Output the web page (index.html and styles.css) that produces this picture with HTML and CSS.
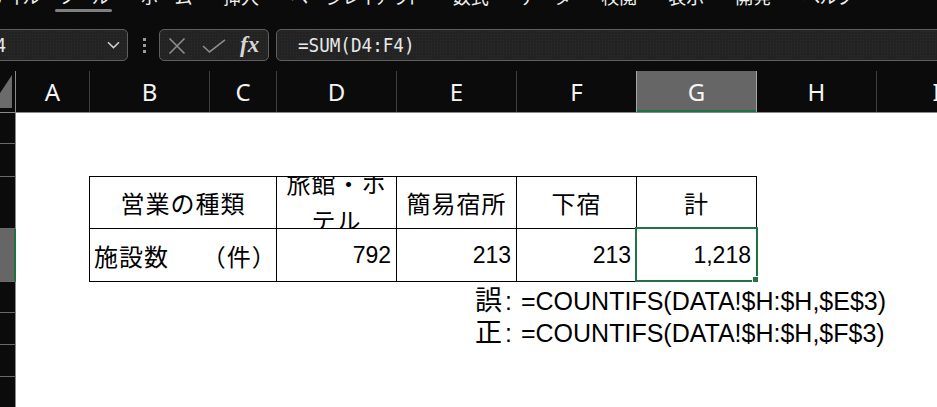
FILE: index.html
```html
<!DOCTYPE html>
<html lang="ja">
<head>
<meta charset="utf-8">
<title>施設数</title>
<link rel="stylesheet" href="styles.css">
</head>
<body>
  <nav class="tabs">
    <span class="tab first">ファイル</span>
    <span class="tab on">ツール</span>
    <span class="tab">ホーム</span>
    <span class="tab">挿入</span>
    <span class="tab">ページレイアウト</span>
    <span class="tab">数式</span>
    <span class="tab">データ</span>
    <span class="tab">校閲</span>
    <span class="tab">表示</span>
    <span class="tab">開発</span>
    <span class="tab">ヘルプ</span>
  </nav>

  <div class="fbar">
    <div class="namebox">
      <span class="mono">G4</span>
      <svg class="chev" width="13" height="8" viewBox="0 0 13 8"><path d="M1 1.2 L6.5 6.6 L12 1.2" fill="none" stroke="#d0d0d0" stroke-width="1.5"/></svg>
    </div>
    <div class="dots"><i></i><i></i><i></i></div>
    <div class="fx-group">
      <svg class="ico-x" width="18" height="16" viewBox="0 0 18 16"><path d="M1.5 0.5 L16.5 15.5 M16.5 0.5 L1.5 15.5" stroke="#8c8c8c" stroke-width="1.6" fill="none"/></svg>
      <svg class="ico-ok" width="24" height="14" viewBox="0 0 24 14"><path d="M1 7 L7.5 13 L23 0.8" stroke="#8c8c8c" stroke-width="1.6" fill="none"/></svg>
      <span class="fx">fx</span>
    </div>
    <div class="input"><span class="mono formula">=SUM(D4:F4)</span></div>
  </div>

  <div class="colhdr">
    <div class="corner">
      <svg width="15" height="41" viewBox="0 0 15 41"><polygon points="12,4 12,37 -10,37" fill="#6b6b6b"/></svg>
    </div>
    <div class="col col-a">A</div>
    <div class="col">B</div>
    <div class="col col-c">C</div>
    <div class="col">D</div>
    <div class="col">E</div>
    <div class="col">F</div>
    <div class="col sel">G</div>
    <div class="col">H</div>
    <div class="col">I</div>
  </div>

  <div class="main">
    <div class="rowhdr">
      <div class="rh r1"></div>
      <div class="rh r2"></div>
      <div class="rh r3"></div>
      <div class="rh r4 sel"></div>
      <div class="rh r5"></div>
      <div class="rh r6"></div>
      <div class="rh r7"></div>
      <div class="rh r8"></div>
    </div>

    <div class="sheet">
      <div class="spacer"></div>
      <div class="tbl">
        <div class="tr tr-head">
          <div class="td wide center">営業の種類</div>
          <div class="td center wrap"><span>旅館・ホテル</span></div>
          <div class="td center">簡易宿所</div>
          <div class="td center">下宿</div>
          <div class="td center">計</div>
        </div>
        <div class="tr tr-body">
          <div class="td wide label">施設数　 （件）</div>
          <div class="td num">792</div>
          <div class="td num">213</div>
          <div class="td num">213</div>
          <div class="td num">1,218</div>
        </div>
      </div>
      <div class="note n1"><span class="kanji">誤</span><span class="colon">:</span>=COUNTIFS(DATA!$H:$H,$E$3)</div>
      <div class="note n2"><span class="kanji">正</span><span class="colon">:</span>=COUNTIFS(DATA!$H:$H,$F$3)</div>

      <div class="selection"><span class="handle"></span></div>
    </div>
  </div>
</body>
</html>
```
FILE: styles.css
```css
* { box-sizing: border-box; }

body {
  margin: 0;
  width: 937px;
  height: 407px;
  overflow: hidden;
  background: #0b0b0b;
  font-family: "Liberation Sans", "Noto Sans CJK JP", sans-serif;
}

/* ribbon tab strip (scrolled mostly out of view) */
.tabs {
  height: 29px;
  display: flex;
  gap: 31px;
  margin-left: -22px;
  overflow: hidden;
  font-family: "Noto Sans CJK JP", sans-serif;
  font-feature-settings: "palt";
  font-size: 18px;
  line-height: 20px;
  color: #f0f0f0;
}
.tab {
  position: relative;
  flex: none;
  height: 20px;
  margin-top: -14px;
  white-space: nowrap;
}
.tab.first { margin-right: -13px; }
.tab.on::after {
  content: "";
  position: absolute;
  left: -3px;
  right: -3px;
  top: 23px;
  height: 3px;
  border-radius: 2px;
  background: #808080;
}

/* formula bar */
.fbar {
  height: 32px;
  display: flex;
  margin-bottom: 10px;
}
.namebox,
.fx-group,
.input {
  border: 1px solid #5f5f5f;
  border-radius: 5px;
  background-color: #232323;
  background-image: radial-gradient(circle, #2d2d2d 0.7px, transparent 0.9px);
  background-size: 3px 3px;
}
.mono {
  font-family: "DejaVu Sans Mono", monospace;
  font-size: 17.6px;
  color: #e8e8e8;
  display: inline-block;
  transform: scaleY(1.12);
}
.namebox {
  flex: none;
  margin-left: -30px;
  width: 158px;
  display: flex;
  align-items: center;
  justify-content: space-between;
  padding: 0 7px 0 14px;
}
.dots {
  flex: none;
  width: 3px;
  margin-left: 15px;
  display: flex;
  flex-direction: column;
  justify-content: center;
  gap: 3px;
}
.dots i {
  display: block;
  width: 3px;
  height: 3px;
  background: #9a9a9a;
}
.fx-group {
  flex: none;
  margin-left: 13px;
  width: 110px;
  display: flex;
  align-items: center;
  padding-left: 8px;
}
.ico-x { margin-top: 1px; }
.ico-ok { margin-left: 16px; margin-top: 1px; }
.fx {
  margin-left: 14px;
  font-family: "Liberation Serif", serif;
  font-style: italic;
  font-weight: bold;
  font-size: 23px;
  color: #d6d6d6;
}
.input {
  flex: 1;
  margin-left: 7px;
  margin-right: -10px;
  display: flex;
  align-items: center;
  padding-left: 21px;
}

/* column headers */
.colhdr {
  height: 42px;
  display: flex;
  overflow: hidden;
  border-bottom: 1px solid #8a8a8a;
}
.corner {
  flex: none;
  width: 16px;
  border-right: 1px solid #8a8a8a;
  overflow: hidden;
}
.corner svg { display: block; }
.col {
  flex: none;
  width: 120px;
  border-right: 1px solid #3e3e3e;
  display: flex;
  align-items: center;
  justify-content: center;
  font-family: "Noto Sans", sans-serif;
  font-size: 24px;
  color: #f4f4f4;
}
.col-a { width: 74px; }
.col-c { width: 67px; }
.col.sel {
  width: 121px;
  margin-left: -1px;
  background: #666;
  border-left: 1px solid #a6a6a6;
  border-right-color: #a6a6a6;
  box-shadow: inset 0 -2px #1e7145;
}

/* rows */
.main {
  display: flex;
  height: 294px;
}
.rowhdr {
  flex: none;
  width: 16px;
}
.rh {
  border-right: 1px solid #8a8a8a;
  border-bottom: 1px solid #6a6a6a;
}
.r1 { height: 31px; }
.r2 { height: 33px; }
.r3 { height: 52px; }
.r4 { height: 53px; }
.r5 { height: 31px; }
.r6 { height: 32px; }
.r7 { height: 32px; }
.r8 { height: 32px; }
.rh.sel {
  background: #666;
  border-right-color: #1e7145;
  box-shadow: inset -1px 0 #1e7145;
}

.sheet {
  flex: 1;
  position: relative;
  background: #fff;
  color: #000;
}
.spacer { height: 63px; }

.tbl {
  margin-left: 73px;
  width: 668px;
  border-left: 1px solid #000;
  border-top: 1px solid #000;
}
.tr {
  display: flex;
  border-bottom: 1px solid #000;
}
.tr-head { height: 52px; }
.tr-body { height: 53px; }
.td {
  flex: none;
  width: 120px;
  border-right: 1px solid #000;
  display: flex;
  align-items: center;
  overflow: hidden;
  font-size: 24px;
  letter-spacing: 1px;
}
.td.wide { width: 187px; }
.center {
  justify-content: center;
  text-align: center;
}
.wrap {
  flex-direction: column;
  justify-content: center;
  line-height: 37px;
}
.label {
  padding-left: 4px;
  white-space: pre;
}
.num {
  justify-content: flex-end;
  padding-right: 5px;
  font-size: 23px;
  letter-spacing: 0;
}

.note {
  display: flex;
  align-items: flex-end;
  padding-left: 459px;
  font-size: 25px;
  line-height: 24px;
  white-space: pre;
}
.kanji { font-size: 27px; }
.colon { margin-left: 3px; margin-right: 9px; }
.n1 { height: 31px; }
.n2 { height: 32px; }

/* active cell frame with fill handle */
.selection {
  position: absolute;
  left: 619px;
  top: 114px;
  width: 123px;
  height: 55px;
  border: 2px solid #217346;
}
.handle {
  position: absolute;
  right: -3px;
  bottom: -3px;
  width: 7px;
  height: 7px;
  background: #217346;
  border: 1px solid #fff;
}
```
